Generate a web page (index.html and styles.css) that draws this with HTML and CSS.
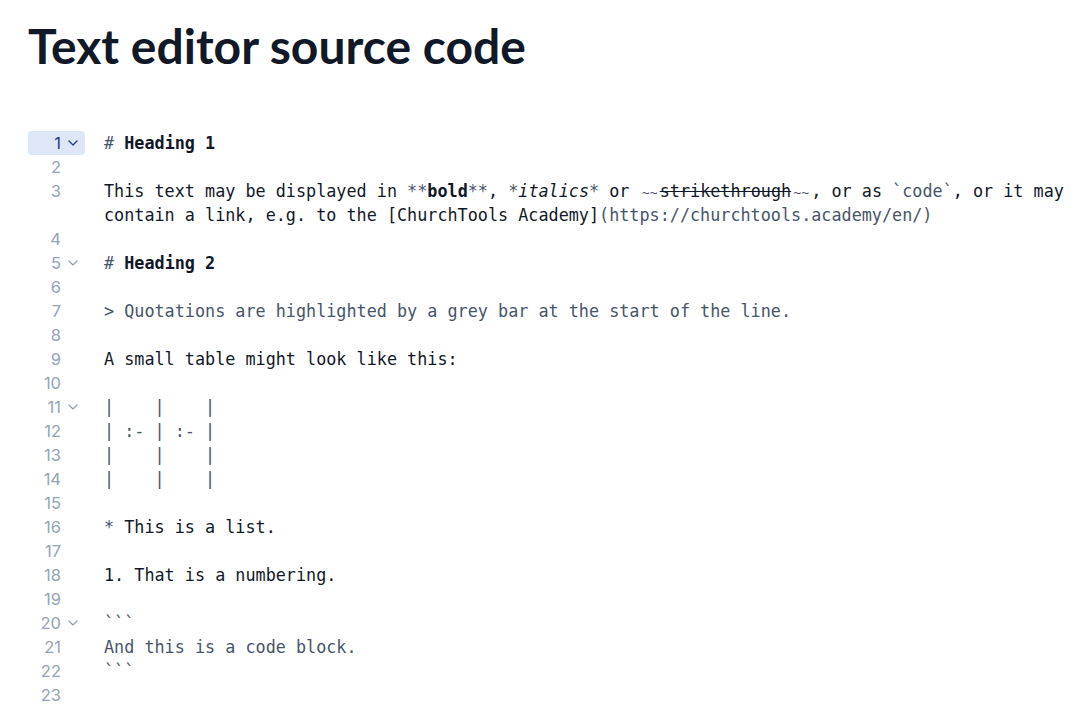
FILE: index.html
```html
<!DOCTYPE html>
<html lang="en">
<head>
<meta charset="utf-8">
<title>Text editor source code</title>
<link rel="stylesheet" href="styles.css">
</head>
<body>
<main class="page">
  <h1 class="title">Text editor source code</h1>
  <div class="editor">
    <div class="gutter active"><span class="num">1</span><span class="fold"><svg viewBox="0 0 10 6" width="10" height="6"><path d="M1 1l4 4 4-4" fill="none" stroke="currentColor" stroke-width="1.3" stroke-linecap="round" stroke-linejoin="round"/></svg></span></div>
    <div class="code"><span class="mark">#</span> <b>Heading 1</b></div>

    <div class="gutter"><span class="num">2</span><span class="fold"></span></div>
    <div class="code"></div>

    <div class="gutter"><span class="num">3</span><span class="fold"></span></div>
    <div class="code">This text may be displayed in <span class="mark">**</span><b>bold</b><span class="mark">**</span>, <span class="mark">*</span><i>italics</i><span class="mark">*</span> or <s><span class="mark tilde">~~</span>strikethrough<span class="mark tilde">~~</span></s>, or as <span class="mark">`code`</span>, or it may contain a link, e.g. to the [ChurchTools Academy]<span class="mark">(https://churchtools.academy/en/)</span></div>

    <div class="gutter"><span class="num">4</span><span class="fold"></span></div>
    <div class="code"></div>

    <div class="gutter"><span class="num">5</span><span class="fold"><svg viewBox="0 0 10 6" width="10" height="6"><path d="M1 1l4 4 4-4" fill="none" stroke="currentColor" stroke-width="1.3" stroke-linecap="round" stroke-linejoin="round"/></svg></span></div>
    <div class="code"><span class="mark">#</span> <b>Heading 2</b></div>

    <div class="gutter"><span class="num">6</span><span class="fold"></span></div>
    <div class="code"></div>

    <div class="gutter"><span class="num">7</span><span class="fold"></span></div>
    <div class="code quote">&gt; Quotations are highlighted by a grey bar at the start of the line.</div>

    <div class="gutter"><span class="num">8</span><span class="fold"></span></div>
    <div class="code"></div>

    <div class="gutter"><span class="num">9</span><span class="fold"></span></div>
    <div class="code">A small table might look like this:</div>

    <div class="gutter"><span class="num">10</span><span class="fold"></span></div>
    <div class="code"></div>

    <div class="gutter"><span class="num">11</span><span class="fold"><svg viewBox="0 0 10 6" width="10" height="6"><path d="M1 1l4 4 4-4" fill="none" stroke="currentColor" stroke-width="1.3" stroke-linecap="round" stroke-linejoin="round"/></svg></span></div>
    <div class="code mark">|    |    |</div>

    <div class="gutter"><span class="num">12</span><span class="fold"></span></div>
    <div class="code mark">| :- | :- |</div>

    <div class="gutter"><span class="num">13</span><span class="fold"></span></div>
    <div class="code mark">|    |    |</div>

    <div class="gutter"><span class="num">14</span><span class="fold"></span></div>
    <div class="code mark">|    |    |</div>

    <div class="gutter"><span class="num">15</span><span class="fold"></span></div>
    <div class="code"></div>

    <div class="gutter"><span class="num">16</span><span class="fold"></span></div>
    <div class="code"><span class="mark">*</span> This is a list.</div>

    <div class="gutter"><span class="num">17</span><span class="fold"></span></div>
    <div class="code"></div>

    <div class="gutter"><span class="num">18</span><span class="fold"></span></div>
    <div class="code">1. That is a numbering.</div>

    <div class="gutter"><span class="num">19</span><span class="fold"></span></div>
    <div class="code"></div>

    <div class="gutter"><span class="num">20</span><span class="fold"><svg viewBox="0 0 10 6" width="10" height="6"><path d="M1 1l4 4 4-4" fill="none" stroke="currentColor" stroke-width="1.3" stroke-linecap="round" stroke-linejoin="round"/></svg></span></div>
    <div class="code mark">```</div>

    <div class="gutter"><span class="num">21</span><span class="fold"></span></div>
    <div class="code mark">And this is a code block.</div>

    <div class="gutter"><span class="num">22</span><span class="fold"></span></div>
    <div class="code mark">```</div>

    <div class="gutter"><span class="num">23</span><span class="fold"></span></div>
    <div class="code"></div>
  </div>
</main>
</body>
</html>
```

FILE: styles.css
```css
html, body {
  margin: 0;
  padding: 0;
  background: #ffffff;
}

.page {
  padding: 17px 0 0 28px;
}

.title {
  margin: 0;
  font-family: Lato, "Noto Sans", sans-serif;
  font-weight: 700;
  font-size: 48px;
  line-height: 1.2;
  color: #111827;
}

.editor {
  margin-top: 56px;
  display: grid;
  grid-template-columns: 57px 1fr;
  column-gap: 19px;
  font-family: "DejaVu Sans Mono", "Liberation Mono", monospace;
}

.gutter {
  display: flex;
  align-items: center;
  height: 24px;
  padding-right: 4px;
  border-radius: 4px;
  font-family: Inter, "Noto Sans", sans-serif;
  font-size: 16.5px;
  color: #94a3b8;
}

.gutter.active {
  background: #dde7f8;
  color: #1e3a8a;
}

.num {
  flex: 1;
  text-align: right;
}

.fold {
  width: 16px;
  margin-left: 4px;
  display: flex;
  align-items: center;
  justify-content: center;
}

.fold svg {
  display: block;
  margin-top: 1px;
}

.code {
  min-height: 24px;
  font-size: 16.8px;
  line-height: 24px;
  white-space: pre-wrap;
  color: #111827;
  padding-right: 4px;
}

.code b {
  font-weight: 700;
}

.code s {
  text-decoration-thickness: 1px;
}

.mark {
  color: #475569;
}

.tilde {
  display: inline-block;
  width: 20.2px;
  font-size: 13px;
  line-height: 0;
  text-align: center;
}

.quote {
  color: #475569;
}
```
